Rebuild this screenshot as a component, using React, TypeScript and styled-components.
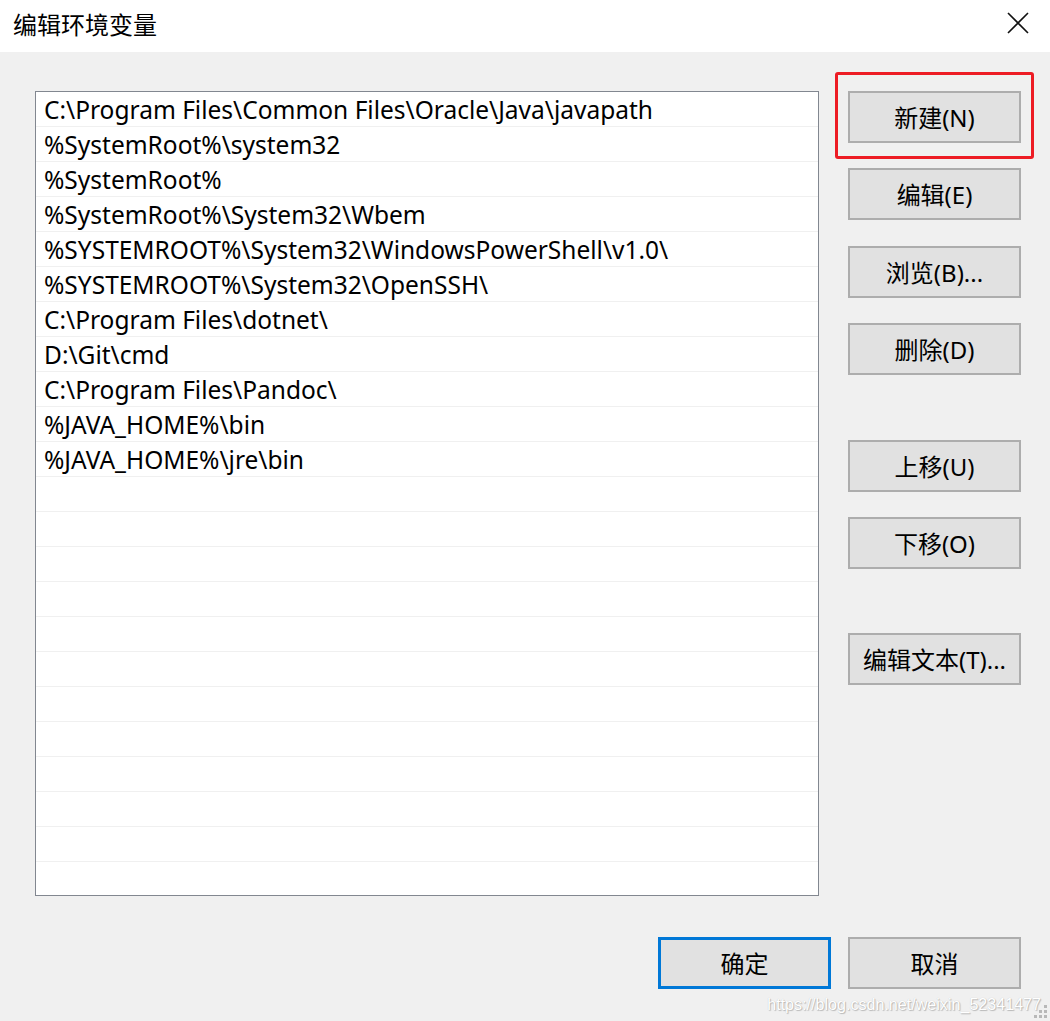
import React from "react";
import styled, { createGlobalStyle } from "styled-components";

const GlobalStyle = createGlobalStyle`
  html, body {
    margin: 0;
    padding: 0;
    background: #f0f0f0;
  }
  body {
    font-family: "Noto Sans", "Noto Sans CJK SC", sans-serif;
  }
`;

const Window = styled.div`
  width: 1050px;
  height: 1021px;
  background: #f0f0f0;
  position: relative;
  overflow: hidden;
  display: flex;
  flex-direction: column;
`;

const TitleBar = styled.div`
  height: 52px;
  background: #ffffff;
  display: flex;
  align-items: center;
  justify-content: space-between;
  padding: 0 20px 0 13px;
  box-sizing: border-box;
`;

const Title = styled.div`
  font-size: 24px;
  color: #000;
  font-family: "Noto Sans CJK SC", sans-serif;
  padding-bottom: 6px;
`;

const CloseButton = styled.div`
  width: 24px;
  height: 24px;
  display: flex;
  align-items: center;
  justify-content: center;
  margin-bottom: 6px;
`;

const Body = styled.div`
  flex: 1;
  display: flex;
  flex-direction: column;
  padding: 39px 29px 0 35px;
`;

const Main = styled.div`
  display: flex;
  gap: 29px;
  height: 805px;
`;

const ListBox = styled.div`
  width: 784px;
  height: 805px;
  box-sizing: border-box;
  border: 1px solid #828790;
  background: #ffffff;
  overflow: hidden;
`;

const Row = styled.div`
  height: 35px;
  box-sizing: border-box;
  border-bottom: 1px solid #f0f0f0;
  padding: 1px 0 0 8px;
  font-size: 24.5px;
  line-height: 34px;
  color: #000;
  white-space: nowrap;
`;

const Side = styled.div`
  width: 173px;
  display: flex;
  flex-direction: column;
`;

const Button = styled.div<{ $primary?: boolean; $space?: number }>`
  width: 173px;
  height: 52px;
  box-sizing: border-box;
  margin-top: ${(p) => p.$space ?? 0}px;
  border: ${(p) => (p.$primary ? "3px solid #0078d7" : "2px solid #adadad")};
  background: #e1e1e1;
  display: flex;
  align-items: center;
  justify-content: center;
  font-size: 24px;
  color: #000;
  font-family: "Noto Sans", "Noto Sans CJK SC", sans-serif;
  padding-bottom: 2px;
`;

const Highlight = styled.div`
  position: relative;
  &::after {
    content: "";
    position: absolute;
    top: -19px;
    left: -13px;
    right: -13px;
    bottom: -16px;
    border: 3px solid #ed1c24;
    border-radius: 3px;
    pointer-events: none;
  }
`;

const Footer = styled.div`
  display: flex;
  justify-content: flex-end;
  gap: 17px;
  margin-top: 41px;
`;

const Watermark = styled.div`
  position: absolute;
  right: 9px;
  bottom: 7px;
  font-family: "Liberation Sans", Arial, sans-serif;
  font-size: 16.1px;
  color: #ffffff;
  text-shadow: 1px 1px 1px rgba(0, 0, 0, 0.22), 0 0 1px rgba(0, 0, 0, 0.2);
  pointer-events: none;
`;

const Grip = styled.div`
  position: absolute;
  right: 3px;
  bottom: 3px;
  display: grid;
  grid-template-columns: repeat(3, 3px);
  grid-template-rows: repeat(3, 3px);
  gap: 2px;
`;

const Dot = styled.div<{ $on: boolean }>`
  background: ${(p) => (p.$on ? "#b8b8b8" : "transparent")};
`;

const paths = [
  "C:\\Program Files\\Common Files\\Oracle\\Java\\javapath",
  "%SystemRoot%\\system32",
  "%SystemRoot%",
  "%SystemRoot%\\System32\\Wbem",
  "%SYSTEMROOT%\\System32\\WindowsPowerShell\\v1.0\\",
  "%SYSTEMROOT%\\System32\\OpenSSH\\",
  "C:\\Program Files\\dotnet\\",
  "D:\\Git\\cmd",
  "C:\\Program Files\\Pandoc\\",
  "%JAVA_HOME%\\bin",
  "%JAVA_HOME%\\jre\\bin",
];

const rows = [...paths, ...Array(12).fill("")];

const gripDots = [false, false, true, false, true, true, true, true, true];

export default function App() {
  return (
    <Window>
      <GlobalStyle />
      <TitleBar>
        <Title>编辑环境变量</Title>
        <CloseButton>
          <svg width="22" height="22" viewBox="0 0 22 22">
            <path d="M1 1 L21 21 M21 1 L1 21" stroke="#111" strokeWidth="1.6" />
          </svg>
        </CloseButton>
      </TitleBar>
      <Body>
        <Main>
          <ListBox>
            {rows.map((r, i) => (
              <Row key={i}>{r}</Row>
            ))}
          </ListBox>
          <Side>
            <Highlight>
              <Button>新建(N)</Button>
            </Highlight>
            <Button $space={25}>编辑(E)</Button>
            <Button $space={26}>浏览(B)...</Button>
            <Button $space={25}>删除(D)</Button>
            <Button $space={65}>上移(U)</Button>
            <Button $space={25}>下移(O)</Button>
            <Button $space={64}>编辑文本(T)...</Button>
          </Side>
        </Main>
        <Footer>
          <Button $primary>确定</Button>
          <Button>取消</Button>
        </Footer>
      </Body>
      <Watermark>https://blog.csdn.net/weixin_52341477</Watermark>
      <Grip>
        {gripDots.map((on, i) => (
          <Dot key={i} $on={on} />
        ))}
      </Grip>
    </Window>
  );
}
